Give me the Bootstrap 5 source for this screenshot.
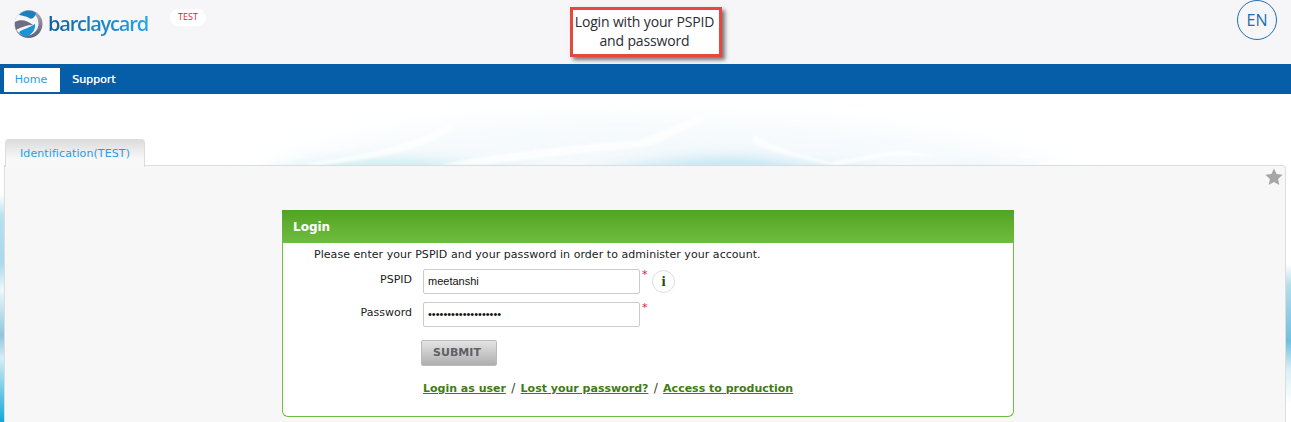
<!doctype html>
<html lang="en">
<head>
    <meta charset="utf-8" />
    <meta name="viewport" content="width=device-width, initial-scale=1" />
    <title>Login - Barclaycard</title>
    <link href="https://cdn.jsdelivr.net/npm/bootstrap@5.3.0/dist/css/bootstrap.min.css" rel="stylesheet" />
    <style>
        body {
            font-family: "DejaVu Sans", Verdana, sans-serif;
            font-size: 11px;
            color: #222;
            background: #fff;
        }
        .top-head { height: 64px; background: #f6f6f9; padding: 0 14px; position: relative; }
        .brand-logo { margin-top: 9px; }
        .brand-name {
            font-family: "Open Sans", sans-serif;
            font-weight: 600;
            font-size: 20px;
            letter-spacing: -1.2px;
            line-height: 28px;
            margin-left: 4px;
            color: transparent;
            background: linear-gradient(90deg, #14619f, #1f8fd6 70%, #25a7e6);
            -webkit-background-clip: text;
            background-clip: text;
        }
        .env-tag {
            font-family: "Open Sans", sans-serif;
            font-size: 9px;
            color: #f0103c;
            background: #fff;
            border-radius: 8px;
            height: 17px;
            line-height: 15px;
            width: 36px;
            text-align: center;
            margin: 9px 0 0 22px;
        }
        .callout {
            position: absolute;
            left: 570px;
            top: 7px;
            width: 152px;
            height: 50px;
            background: #fff;
            border: 3px solid #e8473f;
            box-shadow: 3px 3px 4px #777;
            font-family: "Open Sans", sans-serif;
            font-size: 14px;
            letter-spacing: -0.15px;
            line-height: 19px;
            color: #2b2b33;
            text-align: center;
            padding: 2px 3px 0 0;
        }
        .lang-btn {
            position: absolute;
            left: 1237px;
            top: 0;
            width: 40px;
            height: 40px;
            border: 1px solid #1f6fb5;
            border-radius: 50%;
            font-family: "Open Sans", sans-serif;
            font-size: 16px;
            color: #1a6db5;
            line-height: 38px;
            text-align: center;
        }
        .menu-bar { height: 30px; background: #075ea8; padding: 4px 0 0 4px; }
        .menu-link {
            display: block;
            height: 24px;
            padding: 0 12px;
            line-height: 23px;
            color: #f2f6fa;
            text-shadow: 0.4px 0 0 #f2f6fa;
            font-size: 11px;
            text-decoration: none;
        }
        .menu-link.is-on { width: 56px; padding: 0 2px 0 0; text-align: center; background: #fff; color: #2a9be8; text-shadow: none; }
        .page-bg { position: relative; height: 328px; padding: 45px 5px 0 4px; }
        .page-art { position: absolute; left: 0; top: 0; width: 100%; height: 100%; }
        .tab-strip { position: relative; height: 26px; }
        .id-tab {
            width: 140px;
            height: 28px;
            margin-left: 1px;
            border: 1px solid #ddd;
            border-bottom: 0;
            border-radius: 4px 4px 0 0;
            background: linear-gradient(#dcdcdc, #f8f8f8 70%);
            color: #2a9be8;
            text-align: center;
            line-height: 27px;
            letter-spacing: 0.1px;
            font-size: 11px;
            position: relative;
            z-index: 1;
        }
        .tab-panel {
            position: relative;
            height: 257px;
            background: #f7f7f7;
            border: 1px solid #ddd;
            border-bottom: 0;
            border-radius: 0 4px 0 0;
            padding-top: 44px;
        }
        .fav-star { position: absolute; right: 2px; top: 2px; }
        .login-box {
            width: 732px;
            height: 207px;
            margin-left: 277px;
            background: #fff;
            border: 1px solid #6fbd3f;
            border-top: 0;
            border-radius: 0 0 6px 6px;
        }
        .login-title {
            margin: 0 -1px;
            height: 33px;
            line-height: 34px;
            padding-left: 11px;
            color: #fff;
            font-weight: 700;
            font-size: 12px;
            background: linear-gradient(#53a323, #6fbd3f);
        }
        .login-intro { padding: 5px 0 0 31px; line-height: 14px; height: 26px; letter-spacing: 0.05px; }
        .form-line { height: 33px; }
        .field-name { width: 140px; text-align: right; padding-right: 11px; line-height: 21px; }
        .field-input {
            width: 217px;
            height: 25px;
            padding: 0 4px 2px;
            border: 1px solid #ccc;
            border-radius: 2px;
            background: #fff;
            font-family: "Liberation Sans", Arial, sans-serif;
            font-size: 11px;
            color: #111;
        }
        .req-mark { color: #e8103c; font-size: 11px; line-height: 11px; margin-left: 2px; width: 9px; }
        .info-dot {
            width: 23px;
            height: 23px;
            margin: 1px 0 0 1px;
            border: 1px solid #ddd;
            border-radius: 50%;
            color: #234f08;
            font-family: "Liberation Serif", serif;
            font-weight: 700;
            font-size: 15px;
            line-height: 21px;
            text-align: center;
        }
        .submit-btn {
            display: block;
            width: 76px;
            height: 26px;
            margin: 5px 0 0 138px;
            padding: 0 4px 0 0;
            border: 1px solid #bbb;
            border-radius: 2px;
            background: linear-gradient(#e4e4e4, #aeaeae);
            color: #5f5f66;
            font-family: "DejaVu Sans", Verdana, sans-serif;
            font-weight: 700;
            font-size: 11px;
        }
        .login-links { margin: 15px 0 0 140px; color: #33402a; line-height: 14px; }
        .login-links a { color: #3f7d14; font-weight: 700; }
        .link-sep { margin: 0 1.5px; font-size: 12px; }
    </style>
</head>
<body>
<header class="top-head d-flex align-items-start">
    <div class="brand-logo d-flex align-items-center">
        <svg width="30" height="30" viewBox="0 0 30 30">
            <defs>
                <linearGradient id="ringFill" x1="0.3" y1="0" x2="0.7" y2="1">
                    <stop offset="0" stop-color="#c6c6d0" />
                    <stop offset="1" stop-color="#5e5e74" />
                </linearGradient>
                <filter id="logoSoft"><feGaussianBlur stdDeviation="0.3" /></filter>
            </defs>
            <g filter="url(#logoSoft)">
                <circle cx="14.5" cy="15" r="14" fill="url(#ringFill)" />
                <circle cx="12.5" cy="14.5" r="12" fill="#f6f6f9" />
                <path d="M5 6C9 1 17 0 22 4 21 8 18 11 15 9 12 7 9 7 5 6Z" fill="#1f7fc0" />
                <path d="M1 13C6 10 13 11 19 16 13 16 7 18 2 21 1 18 0.5 15 1 13Z" fill="#6d6d86" />
                <path d="M5 23C9 20 15 19 21 15 22 20 18 26 12 28 9 27 6 25 5 23Z" fill="#1b93d9" />
            </g>
        </svg>
        <span class="brand-name">barclaycard</span>
    </div>
    <div class="env-tag">TEST</div>
    <div class="callout">Login with your PSPID<br />and password</div>
    <div class="lang-btn">EN</div>
</header>
<nav class="menu-bar d-flex">
    <a class="menu-link is-on" href="#">Home</a>
    <a class="menu-link" href="#">Support</a>
</nav>
<main class="page-bg">
    <svg class="page-art" viewBox="0 0 1291 328">
        <defs>
            <filter id="artBlur" x="-10%" y="-50%" width="120%" height="200%"><feGaussianBlur stdDeviation="14" /></filter>
            <filter id="artBlurMid" x="-10%" y="-80%" width="120%" height="260%"><feGaussianBlur stdDeviation="7" /></filter>
            <filter id="artBlurFine" x="-10%" y="-80%" width="120%" height="260%"><feGaussianBlur stdDeviation="1.2" /></filter>
            <linearGradient id="leftEdge" gradientUnits="userSpaceOnUse" x1="0" y1="100" x2="0" y2="328">
                <stop offset="0" stop-color="#fff" />
                <stop offset="0.1" stop-color="#b7e0ee" />
                <stop offset="0.3" stop-color="#a8d9ea" />
                <stop offset="0.42" stop-color="#eef8fb" />
                <stop offset="0.62" stop-color="#8fc6dc" />
                <stop offset="0.72" stop-color="#d5eef5" />
                <stop offset="1" stop-color="#10a8d8" />
            </linearGradient>
            <linearGradient id="rightEdge" gradientUnits="userSpaceOnUse" x1="0" y1="170" x2="0" y2="310">
                <stop offset="0" stop-color="#fff" />
                <stop offset="0.15" stop-color="#b5deeb" />
                <stop offset="0.55" stop-color="#6fbfe0" />
                <stop offset="0.75" stop-color="#d8eff6" />
                <stop offset="1" stop-color="#fff" />
            </linearGradient>
        </defs>
        <path d="M240 90C320 50 450 26 620 26 800 26 980 40 1090 90Z" fill="#f4f9fc" filter="url(#artBlur)" />
        <path d="M250 84C320 66 400 62 470 72 510 76 540 76 570 84Z" fill="#c4ebf0" filter="url(#artBlurMid)" />
        <path d="M570 84C640 68 720 60 770 66 820 76 860 72 900 84Z" fill="#c0e4f3" filter="url(#artBlurMid)" />
        <path d="M900 84C940 70 1000 68 1060 84Z" fill="#e6f4f9" filter="url(#artBlurMid)" />
        <path d="M300 71C340 62 400 58 450 30L454 34C420 60 360 66 320 71Z" fill="#fff" opacity=".75" filter="url(#artBlurFine)" />
        <path d="M440 71C500 58 570 52 640 46L700 22 706 26 650 52C590 58 520 66 480 71Z" fill="#fff" opacity=".8" filter="url(#artBlurFine)" />
        <path d="M755 40C765 50 790 58 830 68L900 56 940 62 890 62 835 72C790 62 760 56 752 46Z" fill="#fff" opacity=".7" filter="url(#artBlurFine)" />
        <rect x="0" y="100" width="5" height="228" fill="url(#leftEdge)" />
        <rect x="1286" y="170" width="5" height="140" fill="url(#rightEdge)" />
    </svg>
    <div class="tab-strip">
        <div class="id-tab">Identification(TEST)</div>
    </div>
    <section class="tab-panel">
        <svg class="fav-star" width="18" height="18" viewBox="0 0 18 18"><path d="M9 .5l2.6 5.6 6 .7-4.5 4.1 1.2 6L9 14l-5.3 2.9 1.2-6L.4 6.8l6-.7z" fill="#a6a6a6" /></svg>
        <div class="login-box">
            <div class="login-title">Login</div>
            <div class="login-intro">Please enter your PSPID and your password in order to administer your account.</div>
            <form>
                <div class="form-line d-flex align-items-start">
                    <label class="field-name">PSPID</label>
                    <input class="field-input" type="text" value="meetanshi" />
                    <span class="req-mark">*</span>
                    <span class="info-dot">i</span>
                </div>
                <div class="form-line d-flex align-items-start">
                    <label class="field-name">Password</label>
                    <input class="field-input" type="password" value="meetanshimeetanshi1" />
                    <span class="req-mark">*</span>
                </div>
                <button class="submit-btn" type="button">SUBMIT</button>
            </form>
            <div class="login-links"><a href="#">Login as user</a><span class="link-sep"> / </span><a href="#">Lost your password?</a><span class="link-sep"> / </span><a href="#">Access to production</a></div>
        </div>
    </section>
</main>
<script src="https://cdn.jsdelivr.net/npm/bootstrap@5.3.0/dist/js/bootstrap.bundle.min.js"></script>
</body>
</html>
